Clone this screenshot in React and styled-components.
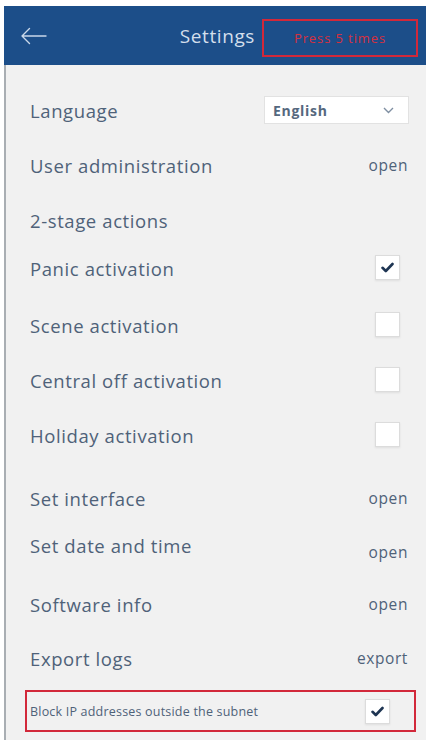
import React from "react";
import styled, { createGlobalStyle } from "styled-components";

const Global = createGlobalStyle`
  html, body { margin: 0; padding: 0; background: #ffffff; }
  body { font-family: "Open Sans", "Liberation Sans", sans-serif; }
  * { box-sizing: border-box; }
`;

const Page = styled.div`
  width: 426px;
  height: 740px;
  padding: 6px 0 0 4px;
  background: #ffffff;
  overflow: hidden;
`;

const Screen = styled.div`
  height: 734px;
  display: flex;
  flex-direction: column;
  background: #f1f1f1;
  border-left: 2px solid #a9aeb3;
`;

const Header = styled.header`
  height: 59px;
  flex: none;
  display: flex;
  align-items: center;
  padding: 0 8px 0 16px;
  background: #1c4e89;
  margin-left: -2px;
`;

const BackButton = styled.button`
  border: 0;
  background: none;
  padding: 0;
  display: flex;
  color: #c9d8ea;
`;

const Title = styled.h1`
  margin: 0 7px 0 auto;
  font-size: 19px;
  font-weight: 400;
  color: #d3dfec;
  letter-spacing: 0.6px;
`;

const Marker = styled.div`
  width: 156px;
  height: 38px;
  margin-top: 5px;
  border: 2px solid #d2283a;
  display: flex;
  align-items: center;
  justify-content: center;
  color: #d6303f;
  font-size: 13px;
  letter-spacing: 0.9px;
`;

const List = styled.div`
  display: flex;
  flex-direction: column;
  padding: 31px 18px 0 24px;
`;

const Row = styled.div`
  height: ${(p) => p.$h}px;
  display: flex;
  align-items: flex-start;
  justify-content: space-between;
  flex: none;
`;

const Line = styled.div`
  height: 28px;
  display: flex;
  align-items: center;
`;

const Label = styled(Line)`
  font-size: 18.5px;
  color: #4f6279;
  letter-spacing: 0.6px;
`;

const Value = styled(Line)`
  font-size: 15.5px;
  color: #4f6279;
  letter-spacing: 0.6px;
  margin-top: ${(p) => p.$drop || 0}px;
`;

const Select = styled.div`
  width: 145px;
  height: 28px;
  margin-right: -1px;
  display: flex;
  align-items: center;
  justify-content: space-between;
  padding: 0 14px 0 8px;
  background: #ffffff;
  border: 1px solid #e2e2e2;
  font-size: 14px;
  font-weight: 700;
  letter-spacing: 0.7px;
  color: #55687e;
`;

const Box = styled.div`
  width: 25px;
  height: 25px;
  margin: 1px 8px 0 0;
  background: #ffffff;
  border: 1px solid #dcdcdc;
  box-shadow: 0 1px 2px rgba(0, 0, 0, 0.08);
  display: flex;
  align-items: center;
  justify-content: center;
`;

const Highlight = styled.div`
  height: 42px;
  margin: 0 -8px 0 -5px;
  padding: 0 16px 0 3px;
  border: 2px solid #d2283a;
  display: flex;
  align-items: center;
  justify-content: space-between;
`;

const SmallLabel = styled.span`
  font-size: 12.5px;
  color: #4f6279;
  letter-spacing: 0.2px;
`;

const Check = ({ on }) => (
  <Box>
    {on && (
      <svg width="13" height="11" viewBox="0 0 13 11">
        <path d="M1.5 5.8 L4.8 9 L11.5 2" fill="none" stroke="#1e3553" strokeWidth="2.6" strokeLinecap="round" strokeLinejoin="round" />
      </svg>
    )}
  </Box>
);

const rows = [
  { label: "User administration", value: "open", h: 55 },
  { label: "2-stage actions", h: 48 },
  { label: "Panic activation", check: true, on: true, h: 57 },
  { label: "Scene activation", check: true, h: 55 },
  { label: "Central off activation", check: true, h: 55 },
  { label: "Holiday activation", check: true, h: 63 },
  { label: "Set interface", value: "open", h: 47 },
  { label: "Set date and time", value: "open", drop: 7, h: 59 },
  { label: "Software info", value: "open", h: 54 },
  { label: "Export logs", value: "export", h: 46 },
];

export default function App() {
  return (
    <Page>
      <Global />
      <Screen>
        <Header>
          <BackButton aria-label="back">
            <svg width="27" height="18" viewBox="0 0 27 18">
              <path d="M26 9 H2 M9.5 1.5 L2 9 L9.5 16.5" fill="none" stroke="currentColor" strokeWidth="1.4" strokeLinecap="round" strokeLinejoin="round" />
            </svg>
          </BackButton>
          <Title>Settings</Title>
          <Marker>Press 5 times</Marker>
        </Header>
        <List>
          <Row $h={55}>
            <Label>Language</Label>
            <Select>
              English
              <svg width="11" height="7" viewBox="0 0 11 7">
                <path d="M1 1 L5.5 5.5 L10 1" fill="none" stroke="#7f8fa2" strokeWidth="1.4" />
              </svg>
            </Select>
          </Row>
          {rows.map((r) => (
            <Row key={r.label} $h={r.h}>
              <Label>{r.label}</Label>
              {r.value && <Value $drop={r.drop}>{r.value}</Value>}
              {r.check && <Check on={r.on} />}
            </Row>
          ))}
          <Highlight>
            <SmallLabel>Block IP addresses outside the subnet</SmallLabel>
            <Check on />
          </Highlight>
        </List>
      </Screen>
    </Page>
  );
}
